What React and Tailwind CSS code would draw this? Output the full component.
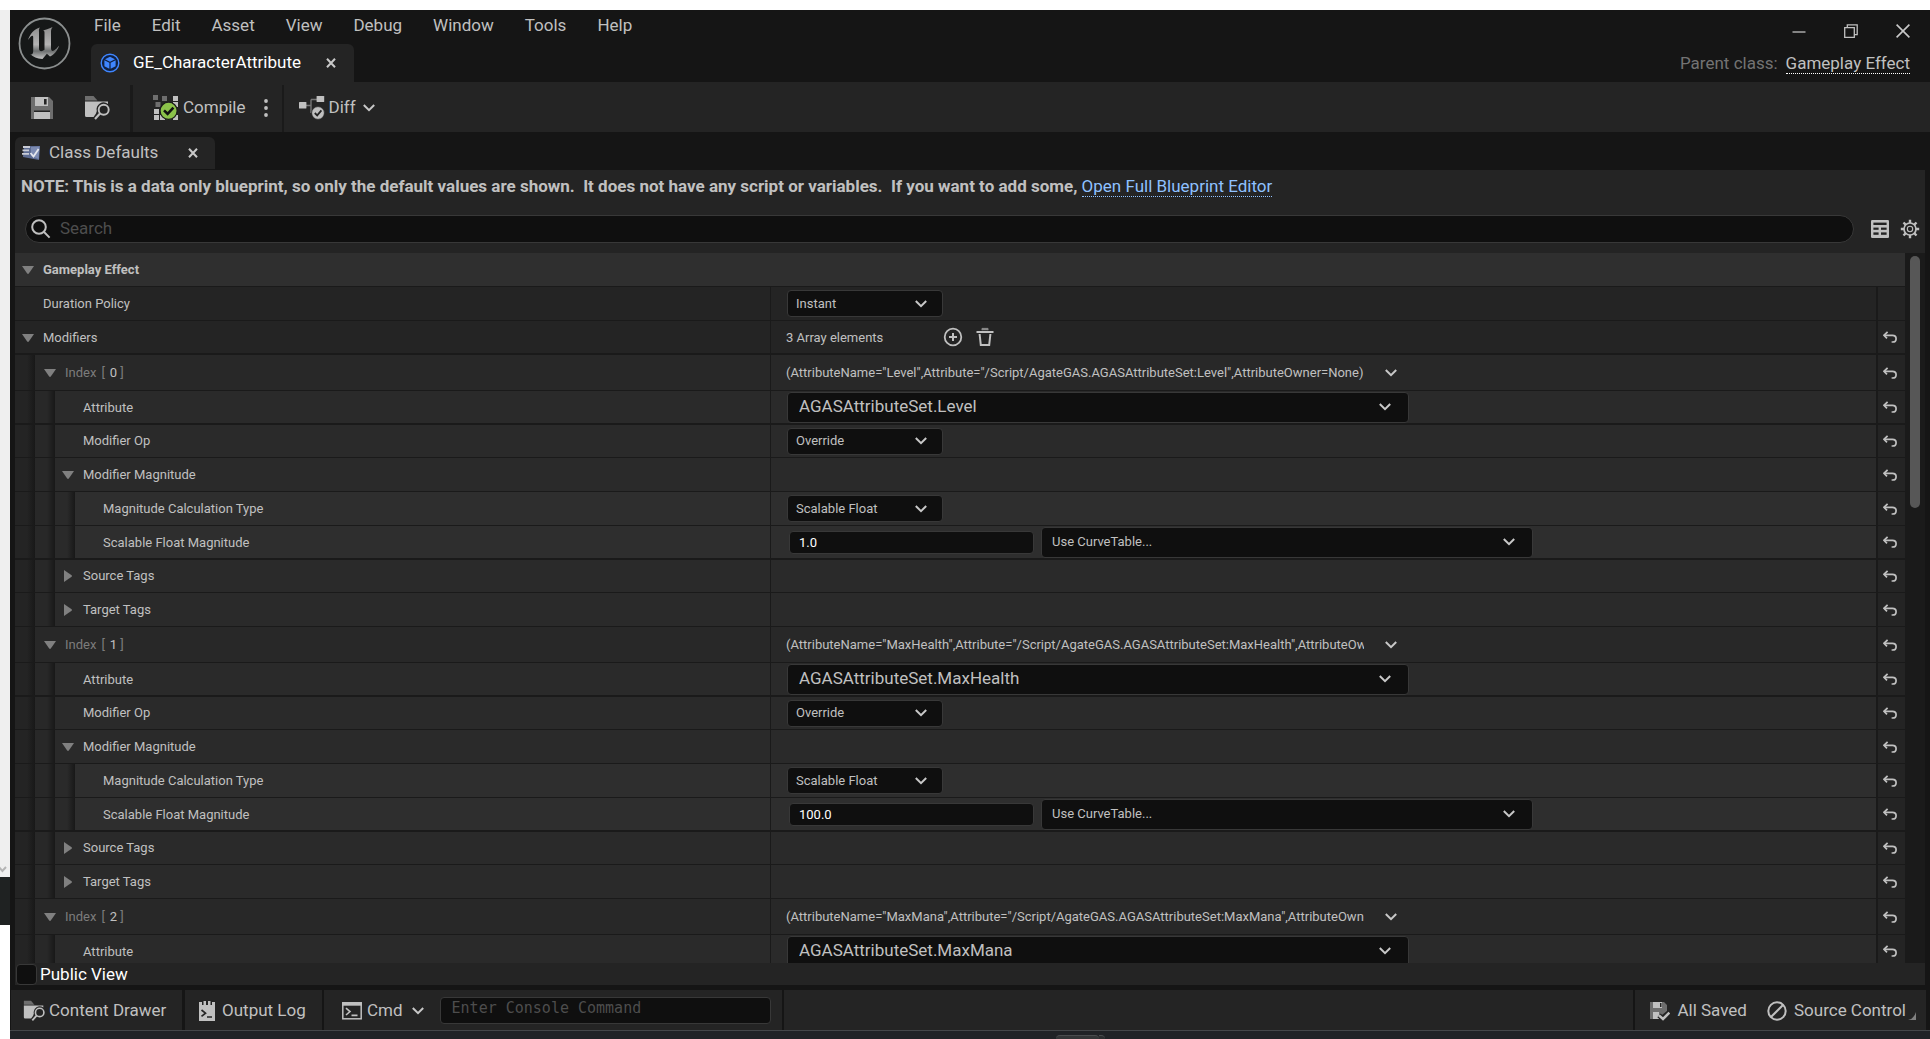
import React, { useState } from "react";

const MENU = ["File", "Edit", "Asset", "View", "Debug", "Window", "Tools", "Help"];

const MODIFIERS = [
  { name: "Level", value: "1.0" },
  { name: "MaxHealth", value: "100.0" },
  { name: "MaxMana", value: "100.0" },
];

const LEVEL_BG = ["bg-[#242424]", "bg-[#282828]", "bg-[#2a2a2a]", "bg-[#2e2e2e]"];

const Chevron = ({ className = "" }) => (
  <svg
    viewBox="0 0 12 8"
    className={`w-3 h-2 shrink-0 ${className}`}
    fill="none"
    stroke="#c8c8c8"
    strokeWidth="2"
    aria-hidden="true"
  >
    <path d="M0.8 1 L6 6.2 L11.2 1" />
  </svg>
);

const CloseIcon = () => (
  <svg viewBox="0 0 10 10" className="w-[10px] h-[10px]" stroke="#c8c8c8" strokeWidth="2">
    <path d="M1 0.7 L9 9.3 M9 0.7 L1 9.3" />
  </svg>
);

const ResetIcon = () => (
  <svg viewBox="0 0 14 12" className="w-[14px] h-3" fill="none" stroke="#c0c0c0" strokeWidth="1.7">
    <path d="M4.6 0.8 L1 4.3 L4 7.4" />
    <path d="M1 4.3 H9.4 C14.4 4.3 14.2 11 9.6 11 H8.6" />
  </svg>
);

const FolderSearchIcon = ({ className }) => (
  <svg viewBox="0 0 26 26" className={className}>
    <path d="M1 5.5 V1 H9.5 L13.5 5.5 Z" fill="#6e6e6e" />
    <path
      d="M1 6.5 H24 V9 A7 7 0 0 0 12.8 16 L12 18.6 L9.6 22 H2.5 Q1 22 1 20.5 Z"
      fill="#c0c0c0"
    />
    <circle cx="19.7" cy="14.7" r="5" fill="#242424" stroke="#c0c0c0" strokeWidth="1.9" />
    <path d="M16 18.6 L11 24" stroke="#c0c0c0" strokeWidth="2.2" />
  </svg>
);

const UnrealLogo = () => (
  <svg viewBox="0 0 54 54" className="w-[54px] h-[54px]" aria-label="Unreal Engine" role="img">
    <defs>
      <linearGradient id="metal" x1="0" y1="0" x2="0" y2="1">
        <stop offset="0" stopColor="#8e8e8e" />
        <stop offset="0.55" stopColor="#b4b4b4" />
        <stop offset="0.75" stopColor="#6d7070" />
        <stop offset="1" stopColor="#c4c4c4" />
      </linearGradient>
    </defs>
    <circle cx="27.5" cy="27.5" r="25" fill="#161818" stroke="#8b8f8f" strokeWidth="1.8" />
    <path
      d="M11 24 C13 18 17 13 23 11.5 C21.7 13 22 14.3 22 16 V32.5 C22 35.5 24.7 36 27.5 33.8 V16.8 C27.5 14.8 26.8 14.6 25.2 15 C28.5 13.6 31.5 12.8 35.6 11 C34.2 13 34 14 34 16.3 V32 C34 35 35.3 35.6 37 34.6 C38.8 33.5 40.6 31.6 42 29.8 C40.6 34.4 37.2 38.7 33 40.6 L29.9 37.7 L25.5 43 C20 42.7 16 41 13.4 38.3 C15.2 38.8 16.2 37.8 16.2 35 V21 C16.2 18.6 13.8 19.7 11 24 Z"
      fill="url(#metal)"
    />
  </svg>
);

const BlueprintIcon = () => (
  <svg viewBox="0 0 20 20" className="w-5 h-5">
    <circle cx="10" cy="10" r="8.8" fill="#11203f" stroke="#3f86ff" strokeWidth="1.4" />
    <path d="M10 3.8 L15 6.2 L10 8.7 L5 6.2 Z" fill="#3f86ff" />
    <path d="M4.4 7.2 L9.4 9.7 V15.8 L4.4 13.2 Z" fill="#3f86ff" />
    <path d="M15.6 7.2 L10.6 9.7 V15.8 L15.6 13.2 Z" fill="#3f86ff" />
  </svg>
);

const SaveIcon = () => (
  <svg viewBox="0 0 22 22" className="w-[22px] h-[22px]">
    <path d="M0 0 H18 L22 4 V22 H0 Z" fill="#6e6e6e" />
    <rect x="4" y="0" width="13" height="9" fill="#c0c0c0" />
    <rect x="13" y="2" width="2.6" height="5.5" fill="#242424" />
    <rect x="3" y="15" width="16" height="7" fill="#c0c0c0" />
    <rect x="3" y="13.5" width="16" height="1.5" fill="#242424" />
  </svg>
);

const CompileIcon = () => (
  <svg viewBox="0 0 26 26" className="w-[26px] h-[26px]">
    <g fill="#6e6e6e">
      <rect x="0" y="0" width="5" height="5" />
      <rect x="9" y="1" width="5" height="5" />
      <rect x="2.5" y="7" width="5" height="5" />
    </g>
    <g fill="#c0c0c0">
      <rect x="20" y="1" width="5" height="5" />
      <rect x="13" y="7" width="5" height="5" />
      <rect x="20" y="7" width="5" height="5" />
      <rect x="1" y="14" width="5" height="5" />
      <rect x="1" y="20" width="5" height="5" />
      <rect x="7" y="20" width="5" height="5" />
      <rect x="20" y="20" width="5" height="5" />
    </g>
    <circle cx="15.6" cy="15.8" r="8.6" fill="#8bc24a" stroke="#1a1a1a" strokeWidth="1.3" />
    <path d="M11 15.4 L14.6 18.8 L20.4 12.6" fill="none" stroke="#111" strokeWidth="2.6" />
  </svg>
);

const DiffIcon = () => (
  <svg viewBox="0 0 26 26" className="w-[26px] h-[26px]">
    <path d="M7 10.5 H12 M12 4.5 V18 M12 4.5 H18" fill="none" stroke="#777" strokeWidth="1.4" />
    <rect x="0" y="7" width="7.4" height="6.6" rx="0.6" fill="#c0c0c0" />
    <rect x="17.6" y="1" width="7.6" height="6" rx="0.6" fill="#c0c0c0" />
    <circle cx="19" cy="18" r="6.4" fill="#c0c0c0" stroke="#242424" strokeWidth="0.8" />
    <path d="M15.8 18 L18.2 20.4 L22.4 15.4" fill="none" stroke="#242424" strokeWidth="1.8" />
  </svg>
);

const DefaultsIcon = () => (
  <svg viewBox="0 0 18 16" className="w-[18px] h-4">
    <path d="M2 1 L18 1 L17 15 L1 12 Z" fill="#5d6c93" />
    <path d="M9 2 L17.5 1.5 L16.6 14 L9 11 Z" fill="#7c8bb2" />
    <path d="M1 2 H8 M0.5 5.4 H7 M0 8.8 H7" stroke="#c9ccd6" strokeWidth="1.8" />
    <path d="M8.5 8 L11.5 11.5 L16.6 4" fill="none" stroke="#e4e6ec" strokeWidth="1.8" />
  </svg>
);

const GearIcon = () => (
  <svg viewBox="0 0 20 20" className="w-5 h-5" fill="none" stroke="#c0c0c0">
    <circle cx="10" cy="10" r="6" strokeWidth="1.7" />
    <circle cx="10" cy="10" r="2.7" strokeWidth="1.1" />
    <path
      strokeWidth="2.4"
      d="M10 4 V0.8 M10 16 V19.2 M4 10 H0.8 M16 10 H19.2 M5.8 5.8 L3.5 3.5 M14.2 5.8 L16.5 3.5 M5.8 14.2 L3.5 16.5 M14.2 14.2 L16.5 16.5"
    />
  </svg>
);

const TableIcon = () => (
  <svg viewBox="0 0 18 18" className="w-[18px] h-[18px]">
    <rect width="18" height="18" rx="1.2" fill="#c0c0c0" />
    <g fill="#242424">
      <rect x="2.4" y="2.6" width="13.2" height="2.4" />
      <rect x="2.4" y="7.6" width="5.2" height="2.2" />
      <rect x="10" y="7.6" width="5.6" height="2.2" />
      <rect x="2.4" y="12.4" width="5.2" height="2.4" />
      <rect x="10" y="12.4" width="5.6" height="2.4" />
    </g>
  </svg>
);

const Arrow = ({ open }) =>
  open ? (
    <svg viewBox="0 0 12 12" className="w-3 h-3" fill="#808080">
      <path d="M0 2 H12 L6.8 9.6 Q6 10.4 5.2 9.6 Z" />
    </svg>
  ) : (
    <svg viewBox="0 0 12 12" className="w-3 h-3" fill="#808080">
      <path d="M2 0 V12 L9.6 6.8 Q10.4 6 9.6 5.2 Z" />
    </svg>
  );

const Combo = ({ label, value, options = [], width, big, tall }) => (
  <div className={`relative flex items-center ml-px ${width}`}>
    <select
      aria-label={label}
      defaultValue={value}
      className={`appearance-none w-full rounded border border-[#383838] bg-[#0f0f0f] text-[#c0c0c0] outline-none ${
        tall ? "h-[31px]" : "h-[27px]"
      } ${big ? "text-[17px] pl-[11px]" : tall ? "text-[13px] pl-[10px]" : "text-[13px] pl-2"}`}
    >
      {[value, ...options].map((o) => (
        <option key={o}>{o}</option>
      ))}
    </select>
    <Chevron
      className={`absolute pointer-events-none ${tall ? "right-[18px]" : "right-4"}`}
    />
  </div>
);

const Row = ({
  level = 0,
  label,
  arrow,
  open,
  onToggle,
  height = "h-[34px]",
  thick,
  reset = true,
  children,
}) => (
  <div
    className={`grid grid-cols-[755fr_1106fr_29px] shrink-0 border-[#1a1a1a] ${height} ${
      thick ? "border-b-2" : "border-b"
    } ${LEVEL_BG[level]}`}
  >
    <div className="flex min-w-0">
      {Array.from({ length: level }).map((_, i) => (
        <div key={i} className={`w-5 shrink-0 ${LEVEL_BG[i]}`}>
          <div className="ml-3 h-full bg-linear-to-r from-transparent to-[#181818]" />
        </div>
      ))}
      <div
        className={`flex items-center ${level === 1 ? "pl-[9px]" : "pl-[7px]"} ${
          thick ? "pt-[2px]" : ""
        }`}
      >
        <div className="w-[21px] flex items-center">
          {arrow && (
            <button type="button" aria-label="Expand" aria-expanded={open} onClick={onToggle}>
              <Arrow open={open} />
            </button>
          )}
        </div>
        <span>{label}</span>
      </div>
    </div>
    <div className="flex items-center min-w-0 border-l border-[#1a1a1a] pl-[15px]">
      {children}
    </div>
    <div className="flex items-center justify-center border-l-2 border-[#1a1a1a] bg-[#242424] pr-[3px]">
      {reset && (
        <button type="button" aria-label="Reset to default">
          <ResetIcon />
        </button>
      )}
    </div>
  </div>
);

const Modifier = ({ index, item }) => {
  const [open, setOpen] = useState(true);
  const [magOpen, setMagOpen] = useState(true);

  return (
    <>
      <Row
        level={1}
        height="h-9"
        arrow
        open={open}
        onToggle={() => setOpen(!open)}
        label={
          <span className="flex items-center text-[#7c7c7c]">
            Index
            <span className="ml-[5px]">[</span>
            <span className="ml-[5px] mr-[3px] text-[#c0c0c0]">{index}</span>]
          </span>
        }
      >
        <span className="w-[578px] overflow-hidden whitespace-nowrap">
          {`(AttributeName="${item.name}",Attribute="/Script/AgateGAS.AGASAttributeSet:${item.name}",AttributeOwner=None)`}
        </span>
        <button type="button" aria-label="Element options" className="ml-[21px]">
          <Chevron />
        </button>
      </Row>
      {open && (
        <>
          <Row level={2} label="Attribute" thick>
            <Combo
              label="Attribute"
              value={`AGASAttributeSet.${item.name}`}
              width="w-[622px]"
              big
              tall
            />
          </Row>
          <Row level={2} label="Modifier Op" height="h-[33px]">
            <Combo
              label="Modifier Op"
              value="Override"
              options={["Add", "Multiply", "Divide"]}
              width="w-[156px]"
            />
          </Row>
          <Row
            level={2}
            label="Modifier Magnitude"
            arrow
            open={magOpen}
            onToggle={() => setMagOpen(!magOpen)}
          />
          {magOpen && (
            <>
              <Row level={3} label="Magnitude Calculation Type">
                <Combo
                  label="Magnitude Calculation Type"
                  value="Scalable Float"
                  options={["Attribute Based", "Set By Caller"]}
                  width="w-[156px]"
                />
              </Row>
              <Row level={3} label="Scalable Float Magnitude" thick>
                <input
                  aria-label="Scalable Float Magnitude"
                  defaultValue={item.value}
                  className="ml-[3px] mr-[6px] w-[245px] h-[23px] rounded border border-[#383838] bg-[#0f0f0f] pl-[9px] text-white outline-none"
                />
                <Combo label="Curve table" value="Use CurveTable..." width="w-[492px]" tall />
              </Row>
            </>
          )}
          <Row level={2} label="Source Tags" height="h-[33px]" arrow open={false} />
          <Row level={2} label="Target Tags" arrow open={false} />
        </>
      )}
    </>
  );
};

const TitleBar = () => (
  <header className="flex h-[72px] shrink-0">
    <div className="w-[81px] shrink-0 pl-[7px] pt-[6px]">
      <UnrealLogo />
    </div>
    <div className="flex flex-col justify-between">
      <nav className="flex gap-[31px] pl-[3px] pt-[3px]">
        {MENU.map((m) => (
          <button key={m} type="button" className="leading-6">
            {m}
          </button>
        ))}
      </nav>
      <div className="flex items-center h-[38px] w-[263px] rounded-t-md bg-[#242424] pl-[9px]">
        <BlueprintIcon />
        <span className="ml-[13px] text-white">GE_CharacterAttribute</span>
        <button type="button" aria-label="Close tab" className="ml-auto mr-[18px]">
          <CloseIcon />
        </button>
      </div>
    </div>
    <div className="ml-auto flex flex-col items-end justify-between pr-5 pt-[14px] pb-2">
      <div className="flex items-center gap-[38px]">
        <button type="button" aria-label="Minimize">
          <svg viewBox="0 0 14 14" className="w-[14px] h-[14px]" stroke="#c0c0c0" strokeWidth="1.3">
            <path d="M0.5 8 H13.5" />
          </svg>
        </button>
        <button type="button" aria-label="Restore">
          <svg
            viewBox="0 0 14 14"
            className="w-[14px] h-[14px]"
            fill="none"
            stroke="#c0c0c0"
            strokeWidth="1.3"
          >
            <path d="M0.7 3.7 H10.3 V13.3 H0.7 Z M3.3 3.5 V0.8 H13.2 V10.6 H10.5" />
          </svg>
        </button>
        <button type="button" aria-label="Close">
          <svg viewBox="0 0 14 14" className="w-[14px] h-[14px]" stroke="#c8c8c8" strokeWidth="1.6">
            <path d="M0.6 0.6 L13.4 13.4 M13.4 0.6 L0.6 13.4" />
          </svg>
        </button>
      </div>
      <p className="text-[#737373] leading-[22px]">
        Parent class:
        <a
          href="#parent"
          className="ml-2 inline-block leading-5 text-[#c0c0c0] border-b border-dotted border-white"
        >
          Gameplay Effect
        </a>
      </p>
    </div>
  </header>
);

const Toolbar = () => (
  <div className="flex items-center h-[50px] shrink-0 bg-[#242424] pt-[2px]">
    <button type="button" aria-label="Save" className="ml-[21px]">
      <SaveIcon />
    </button>
    <button type="button" aria-label="Browse" className="ml-[31px]">
      <FolderSearchIcon className="w-[26px] h-[26px]" />
    </button>
    <div className="ml-5 w-[3px] h-[47px] bg-[#1a1a1a]" />
    <button type="button" className="ml-5 flex items-center gap-1">
      <CompileIcon />
      Compile
    </button>
    <button type="button" aria-label="Compile options" className="ml-[18px]">
      <svg viewBox="0 0 4 18" className="w-1 h-[18px]" fill="#c0c0c0">
        <circle cx="2" cy="2" r="1.9" />
        <circle cx="2" cy="9" r="1.9" />
        <circle cx="2" cy="16" r="1.9" />
      </svg>
    </button>
    <div className="ml-[14px] w-[2px] h-[47px] bg-[#1a1a1a]" />
    <button type="button" className="ml-[15px] flex items-center gap-1">
      <DiffIcon />
      Diff
      <Chevron className="ml-[3px]" />
    </button>
  </div>
);

const StatusBar = () => (
  <footer className="flex h-10 shrink-0 items-stretch bg-[#242424] ml-[1px] mr-1">
    <button type="button" className="flex items-center gap-1 pl-3 pt-px w-[171px]">
      <FolderSearchIcon className="w-[22px] h-[22px]" />
      Content Drawer
    </button>
    <div className="w-[3px] bg-[#151515]" />
    <button type="button" className="flex items-center gap-[7px] pl-[14px] pt-px w-[137px]">
      <svg viewBox="0 0 16 20" className="w-4 h-5">
        <path d="M0 1 H3 V4 H4.5 V0 H7 V4 H9 V0 H11.5 V4 H13 V1 H16 V20 H0 Z" fill="#c0c0c0" />
        <path d="M2.5 9 L6.5 12.2 L2.5 15.4 M8 16 H13" fill="none" stroke="#242424" strokeWidth="1.7" />
      </svg>
      Output Log
    </button>
    <div className="w-[2px] bg-[#151515]" />
    <button type="button" className="flex items-center ml-[18px] gap-[5px] pt-px">
      <svg viewBox="0 0 20 18" className="w-5 h-[18px]" fill="none" stroke="#c0c0c0">
        <rect x="0.8" y="0.8" width="18.4" height="16" strokeWidth="1.5" />
        <path d="M0 2 H20" strokeWidth="3.4" />
        <path d="M4 6.2 L8 9.6 L4 13 M9.5 13.4 H15.5" strokeWidth="1.6" />
      </svg>
      Cmd
      <Chevron className="ml-1" />
    </button>
    <input
      aria-label="Console command"
      placeholder="Enter Console Command"
      className="self-center ml-4 w-[331px] h-[27px] rounded border border-[#383838] bg-[#0f0f0f] pl-[11px] pb-1 text-[15px] font-['DejaVu_Sans_Mono',monospace] placeholder-[#4d4d4d] outline-none"
    />
    <div className="ml-[11px] w-[2px] bg-[#151515]" />
    <div className="ml-auto w-[2px] bg-[#151515]" />
    <button type="button" className="ml-[15px] flex items-center gap-[7px] pt-px">
      <svg viewBox="0 0 20 20" className="w-5 h-5">
        <path d="M0 1 H14 L17 4 V10 L12 14 L8 18 H0 Z" fill="#6e6e6e" />
        <rect x="3" y="1" width="9" height="6" fill="#c0c0c0" />
        <rect x="10" y="2" width="1.5" height="4" fill="#242424" />
        <path d="M3 11 H9 V18 H3 Z" fill="#c0c0c0" />
        <path d="M9 14.4 L13 18 L19.4 11.6" fill="none" stroke="#242424" strokeWidth="5" />
        <path d="M9 14.4 L13 18 L19.4 11.6" fill="none" stroke="#c0c0c0" strokeWidth="2.6" />
      </svg>
      All Saved
    </button>
    <button type="button" className="ml-5 flex items-center gap-[7px] pt-px">
      <svg viewBox="0 0 20 20" className="w-5 h-5" fill="none" stroke="#c0c0c0" strokeWidth="2">
        <circle cx="10" cy="10" r="8.7" />
        <path d="M16 4 L4 16" />
      </svg>
      Source Control
    </button>
    <svg viewBox="0 0 8 8" className="w-2 h-2 self-end ml-[2px] mb-[10px] mr-[10px]" fill="#808080">
      <path d="M8 0 V8 H0 Q6 7 8 0 Z" />
    </svg>
  </footer>
);

export default function App() {
  return (
    <div className="h-screen flex flex-col overflow-hidden bg-white font-[Roboto,sans-serif] text-[17px] text-[#c0c0c0]">
      <div className="h-[10px] shrink-0" />
      <div className="flex flex-1 min-h-0">
        {/* sliver of the window behind */}
        <div className="w-[10px] shrink-0 flex flex-col">
          <div className="flex-1 bg-[#efefef] flex items-end">
            <svg viewBox="0 0 10 16" className="w-[10px] h-4" fill="none" stroke="#b5b5b5" strokeWidth="2">
              <path d="M-2 5 L2.4 10 L6 6" />
            </svg>
          </div>
          <div className="h-12 bg-[#1f2222]" />
          <div className="h-[114px] bg-white" />
        </div>

        <div className="flex-1 min-w-0 flex flex-col bg-[#151515]">
          <TitleBar />
          <Toolbar />

          <div className="flex items-end h-[38px] shrink-0 px-[5px] pb-[1px]">
            <div className="flex items-center h-8 w-[200px] rounded-t-md bg-[#242424] pl-[7px]">
              <DefaultsIcon />
              <span className="ml-[9px]">Class Defaults</span>
              <button type="button" aria-label="Close tab" className="ml-auto mr-[17px]">
                <CloseIcon />
              </button>
            </div>
          </div>

          <main className="flex-1 min-h-0 flex flex-col mx-[5px] bg-[#242424]">
            <p className="h-[45px] shrink-0 pl-[6px] pt-1 leading-6 font-bold whitespace-pre">
              {"NOTE: This is a data only blueprint, so only the default values are shown.  It does not have any script or variables.  If you want to add some, "}
              <a
                href="#full"
                className="inline-block leading-5 font-normal text-[#8fc1ff] border-b border-dotted border-[#8fc1ff]"
              >
                Open Full Blueprint Editor
              </a>
            </p>
            <div className="flex items-center shrink-0 h-7 mb-[10px] pl-[10px] pr-[5px]">
              <label className="flex-1 flex items-center h-7 rounded-full border border-[#383838] bg-[#0f0f0f] pl-[5px]">
                <svg viewBox="0 0 20 20" className="w-5 h-5" fill="none" stroke="#c0c0c0" strokeWidth="2">
                  <circle cx="8" cy="8" r="6.8" />
                  <path d="M12.8 12.8 L18.6 18.6" />
                </svg>
                <input
                  aria-label="Search"
                  placeholder="Search"
                  className="ml-[9px] flex-1 bg-transparent placeholder-[#4d4d4d] outline-none"
                />
              </label>
              <button type="button" aria-label="Property matrix" className="ml-[17px]">
                <TableIcon />
              </button>
              <button type="button" aria-label="Settings" className="ml-[11px]">
                <GearIcon />
              </button>
            </div>

            <div className="flex flex-1 min-h-0">
              <div className="flex-1 min-w-0 flex flex-col overflow-hidden text-[13px]">
                <div className="flex items-center h-[34px] shrink-0 border-b border-[#1a1a1a] bg-[#2f2f2f] pl-[7px] font-bold">
                  <button type="button" aria-label="Collapse category" className="w-[21px]">
                    <Arrow open />
                  </button>
                  Gameplay Effect
                </div>
                <Row label="Duration Policy" reset={false}>
                  <Combo
                    label="Duration Policy"
                    value="Instant"
                    options={["Infinite", "Has Duration"]}
                    width="w-[156px]"
                  />
                </Row>
                <Row label="Modifiers" arrow open thick>
                  <span className="w-[157px] pt-[2px]">3 Array elements</span>
                  <button type="button" aria-label="Add element">
                    <svg viewBox="0 0 20 20" className="w-5 h-5" fill="none" stroke="#c0c0c0" strokeWidth="1.8">
                      <circle cx="10" cy="10" r="8.3" />
                      <path d="M10 6 V14 M6 10 H14" strokeWidth="2" />
                    </svg>
                  </button>
                  <button type="button" aria-label="Clear array" className="ml-3">
                    <svg viewBox="0 0 20 20" className="w-5 h-5" fill="none" stroke="#c0c0c0" strokeWidth="2">
                      <path d="M1.5 5 H18.5" />
                      <path d="M7 3.2 V1.4 H13 V3.2" fill="#8a8a8a" stroke="#8a8a8a" strokeWidth="1" />
                      <path d="M4.6 7 L5.8 18 H14.2 L15.4 7" />
                    </svg>
                  </button>
                </Row>
                {MODIFIERS.map((m, i) => (
                  <Modifier key={m.name} index={i} item={m} />
                ))}
              </div>
              <div className="w-5 shrink-0 bg-[#1a1a1a] pt-[3px] px-[5px]">
                <div className="h-[252px] rounded-full bg-[#575757]" />
              </div>
            </div>

            <label className="flex items-center h-[22px] shrink-0 pl-[1px] gap-[3px] text-white">
              <input
                type="checkbox"
                className="appearance-none w-[21px] h-[21px] rounded border border-[#383838] bg-[#0f0f0f]"
              />
              <span className="pt-[2px]">Public View</span>
            </label>
          </main>

          <div className="h-[5px] shrink-0" />
          <StatusBar />
          <div className="h-[9px] shrink-0 flex items-end border-t border-[#444649] bg-[#202226]">
            <div className="ml-[1046px] w-[43px] h-1 rounded-t border-t border-[#4a4c4e] bg-[#333537]" />
            <div className="w-[6px] h-1 rounded-tr border-t border-[#4a4c4e] bg-[#2b2d2f]" />
          </div>
        </div>
      </div>
    </div>
  );
}
